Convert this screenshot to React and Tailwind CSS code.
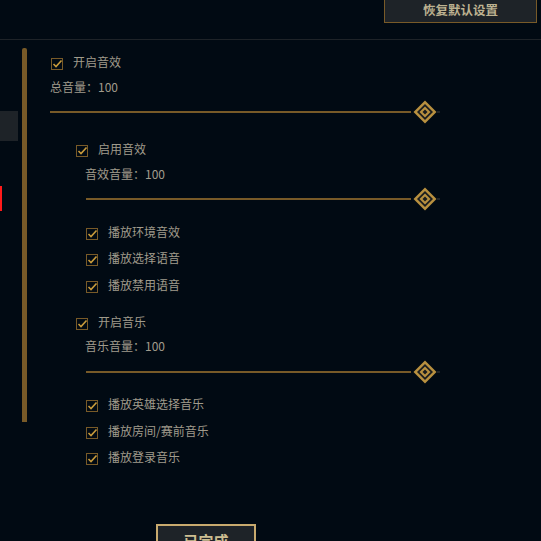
import React from 'react';

const font = { fontFamily: '"Noto Sans CJK SC", "Noto Sans", sans-serif' };

const CheckRow = ({ label, className }) => (
    <div className={`flex h-[12px] items-center ${className}`}>
        <div className="w-[12px] h-[12px] border border-[#785a28] shrink-0">
            <svg width="12" height="12" viewBox="0 0 12 12" className="overflow-visible -mt-px -ml-px">
                <polyline points="2.5,6 5,8.5 10.5,2.5" fill="none" stroke="#c89b3c" strokeWidth="1.6" />
            </svg>
        </div>
        <span className="ml-[10px] mb-[4px] text-[12px] leading-[16px] text-[#a09b8c] whitespace-nowrap">{label}</span>
    </div>
);

const Thumb = () => (
    <svg width="24" height="24" viewBox="0 0 24 24" className="shrink-0">
        <polygon points="12,0.5 23.5,12 12,23.5 0.5,12" fill="#b8903f" />
        <polygon points="12,4 20,12 12,20 4,12" fill="#1a1d1f" />
        <polygon points="12,6.5 17.5,12 12,17.5 6.5,12" fill="#b8903f" />
        <polygon points="12,9.5 14.5,12 12,14.5 9.5,12" fill="#1a1d1f" />
    </svg>
);

const Slider = ({ lineWidth, className }) => (
    <div className={`flex h-[24px] items-center ${className}`}>
        <div className={`h-[2px] bg-[#785a28] ${lineWidth}`} />
        <div className="w-[2px]" />
        <Thumb />
        <div className="h-[2px] w-[3px] bg-[#1e2328]" />
    </div>
);

const Label = ({ text, className }) => (
    <div className={`h-[16px] text-[12px] leading-[16px] text-[#a09b8c] whitespace-nowrap ${className}`}>{text}</div>
);

export default function App() {
    return (
        <div className="w-[541px] h-[541px] bg-[#010a13] overflow-hidden flex flex-col" style={font}>
            <div className="h-[39px] shrink-0 flex justify-end pr-[4px] border-b border-[#1e2328] box-content">
                <button className="-mt-[10px] h-[33px] w-[153px] pt-[7px] bg-[#1e2328] border border-[#785a28] text-[12.5px] font-bold text-[#bdb291] leading-[16px]">
                    恢复默认设置
                </button>
            </div>

            <div className="flex flex-1">
                <div className="w-[18px] shrink-0 flex flex-col">
                    <div className="mt-[71px] h-[30px] bg-[#1e2328]" />
                    <div className="mt-[45px] h-[25px] w-[2px] bg-[#ff1a1a]" />
                </div>
                <div className="ml-[4px] mt-[8px] w-[5px] h-[374px] rounded-t-[2px] bg-[#785a28]" />

                <div className="ml-[23px] flex flex-col">
                    <CheckRow label="开启音效" className="mt-[18px] ml-[1px]" />
                    <Label text="总音量：100" className="mt-[9px]" />
                    <Slider lineWidth="w-[361px]" className="mt-[5px]" />

                    <CheckRow label="启用音效" className="mt-[21px] ml-[26px]" />
                    <Label text="音效音量：100" className="mt-[9px] ml-[35px]" />
                    <Slider lineWidth="w-[325px]" className="mt-[5px] ml-[36px]" />

                    <CheckRow label="播放环境音效" className="mt-[17px] ml-[36px]" />
                    <CheckRow label="播放选择语音" className="mt-[14px] ml-[36px]" />
                    <CheckRow label="播放禁用语音" className="mt-[15px] ml-[36px]" />

                    <CheckRow label="开启音乐" className="mt-[25px] ml-[26px]" />
                    <Label text="音乐音量：100" className="mt-[8px] ml-[35px]" />
                    <Slider lineWidth="w-[325px]" className="mt-[6px] ml-[36px]" />

                    <CheckRow label="播放英雄选择音乐" className="mt-[16px] ml-[36px]" />
                    <CheckRow label="播放房间/赛前音乐" className="mt-[15px] ml-[36px]" />
                    <CheckRow label="播放登录音乐" className="mt-[14px] ml-[36px]" />

                    <button className="mt-[59px] ml-[106px] w-[100px] h-[34px] shrink-0 bg-[#1e2328] border-2 border-[#c8aa6e] text-[15px] font-bold text-[#cdbe91] leading-[20px]">
                        已完成
                    </button>
                </div>
            </div>
        </div>
    );
}
